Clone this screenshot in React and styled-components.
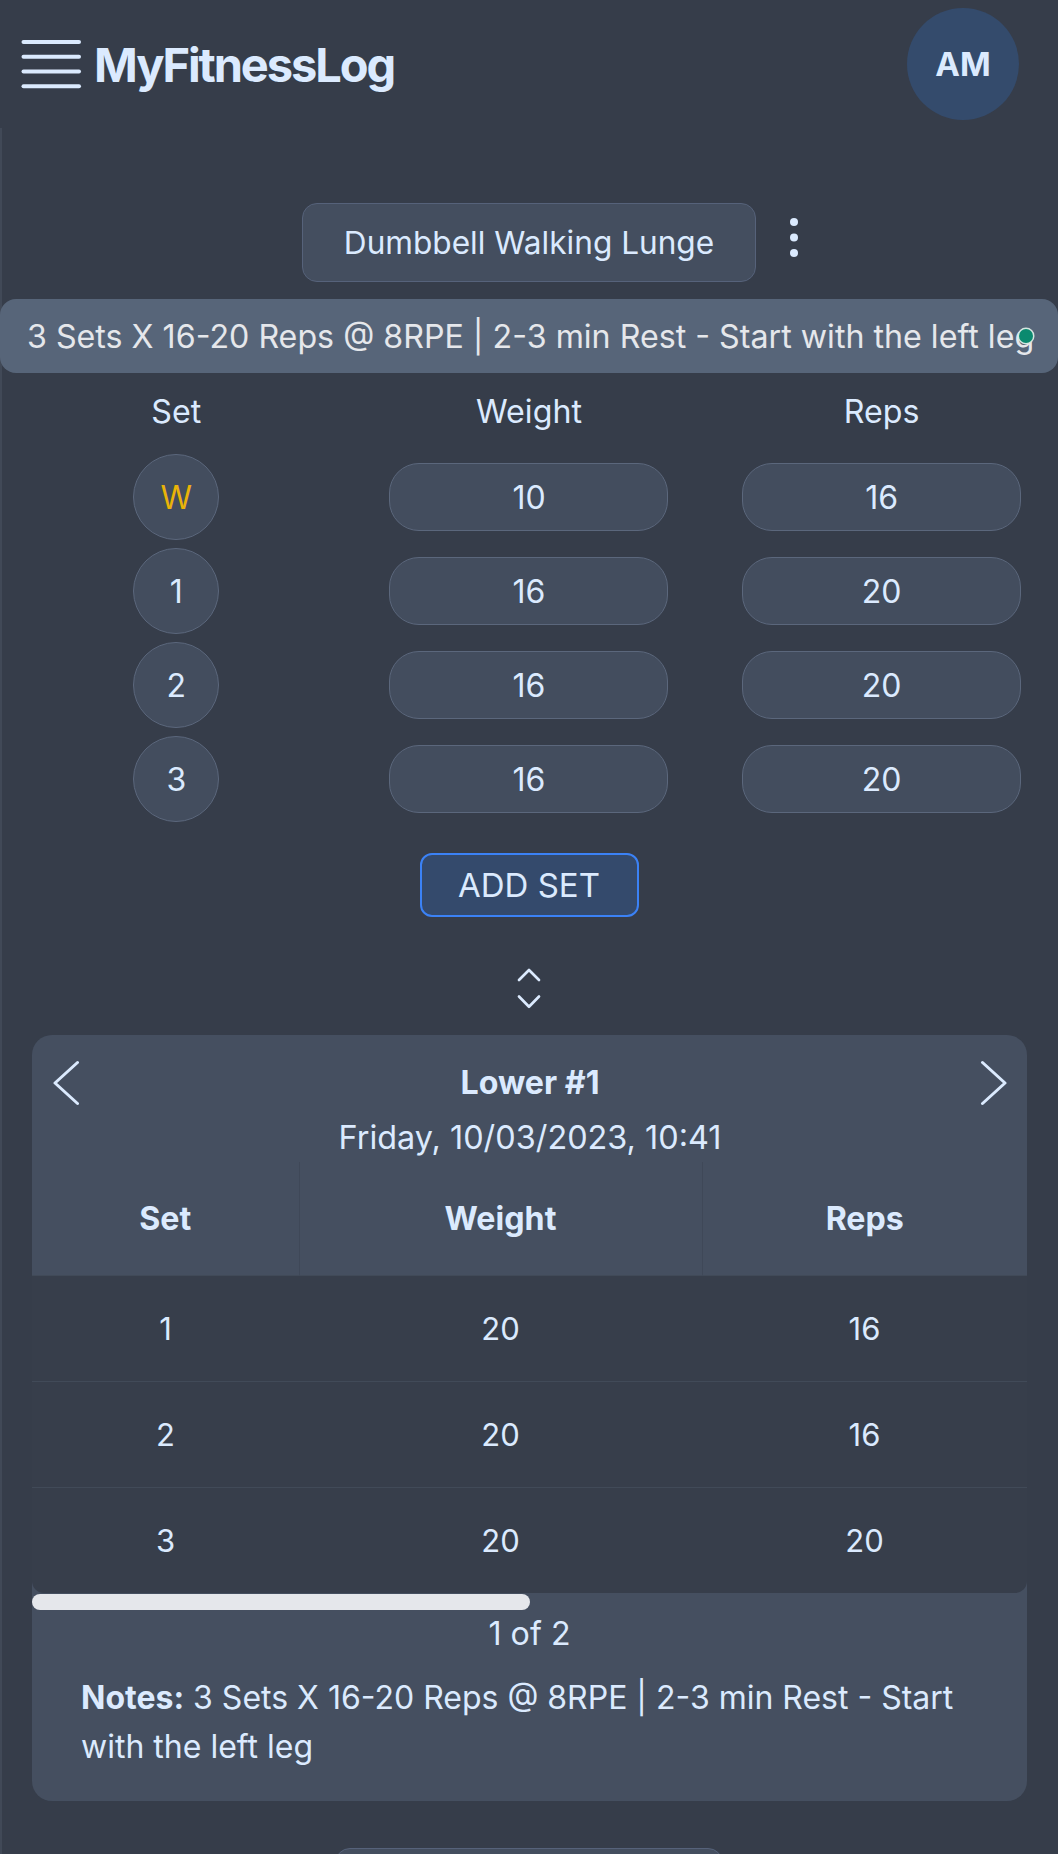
import React from "react";
import styled, { createGlobalStyle } from "styled-components";

const GlobalStyle = createGlobalStyle`
  html, body { margin: 0; padding: 0; background: #363d4a; }
  body { font-family: Inter, "Noto Sans", sans-serif; color: #dbeafe; }
  * { box-sizing: border-box; }
`;

const Page = styled.div`
  width: 1058px;
  min-height: 1854px;
  background: #363d4a;
  overflow: hidden;
`;

const Header = styled.header`
  height: 128px;
  display: flex;
  align-items: center;
  justify-content: space-between;
  padding: 0 39px 0 19px;
`;

const Brand = styled.div`
  display: flex;
  align-items: center;
  gap: 11px;
`;

const MenuButton = styled.button`
  background: none;
  border: none;
  padding: 0;
  display: flex;
  cursor: pointer;
`;

const Logo = styled.h1`
  margin: 0;
  font-size: 47px;
  font-weight: 700;
  letter-spacing: -2.1px;
  line-height: 1;
  color: #dbeafe;
`;

const Avatar = styled.div`
  width: 112px;
  height: 112px;
  border-radius: 50%;
  background: #344b6c;
  display: flex;
  align-items: center;
  justify-content: center;
  font-size: 33px;
  font-weight: 700;
  color: #dbeafe;
`;

const Main = styled.main`
  display: flex;
  flex-direction: column;
  padding-top: 75px;
  box-shadow: inset 2px 0 0 #414957;
`;

const ExerciseRow = styled.div`
  display: grid;
  grid-template-columns: 1fr auto 1fr;
  align-items: center;
`;

const ExerciseButton = styled.button`
  grid-column: 2;
  height: 79px;
  padding: 0 41px;
  border: 1.5px solid #56627a;
  border-radius: 15px;
  background: #444e5f;
  color: #dbeafe;
  font-family: inherit;
  font-size: 31.6px;
`;

const MoreButton = styled.button`
  grid-column: 3;
  justify-self: start;
  margin: 0 0 9px 31px;
  background: none;
  border: none;
  padding: 2px;
  display: flex;
`;

const NoteBanner = styled.div`
  position: relative;
  margin-top: 17px;
  height: 74px;
  border-radius: 16px;
  background: #576579;
  display: flex;
  align-items: center;
  padding-left: 27px;
  white-space: nowrap;
  overflow: hidden;
  font-size: 32.2px;
  color: #e5e7eb;
`;

const StatusDot = styled.span`
  position: absolute;
  right: 25px;
  top: 30px;
  width: 14px;
  height: 14px;
  border-radius: 50%;
  background: #0b8a6f;
  box-shadow: 0 0 0 1.5px #d5e6e0;
`;

const SetGrid = styled.div`
  display: grid;
  grid-template-columns: repeat(3, 1fr);
  row-gap: 8px;
  justify-items: center;
  align-items: center;
  margin-top: 16px;
`;

const ColHead = styled.div`
  font-size: 32.2px;
  line-height: 46px;
  margin-bottom: 11px;
`;

const SetBadge = styled.div`
  width: 86px;
  height: 86px;
  border-radius: 50%;
  border: 1.5px solid #5b677c;
  background: #434d5e;
  display: flex;
  align-items: center;
  justify-content: center;
  font-size: 32px;
  color: ${(p) => (p.$warmup ? "#eab308" : "#dbeafe")};
`;

const ValuePill = styled.div`
  width: 279px;
  height: 68px;
  border-radius: 30px;
  border: 1.5px solid #5b677c;
  background: #434d5e;
  display: flex;
  align-items: center;
  justify-content: center;
  font-size: 32px;
`;

const AddSetButton = styled.button`
  align-self: center;
  margin-top: 31px;
  width: 219px;
  height: 64px;
  border: 2px solid #3b82f6;
  border-radius: 12px;
  background: #344a6c;
  color: #dbeafe;
  font-family: inherit;
  font-size: 33px;
`;

const ToggleButton = styled.button`
  align-self: center;
  margin-top: 49px;
  background: none;
  border: none;
  padding: 0;
  display: flex;
`;

const HistoryCard = styled.section`
  margin: 24px 31px 0 32px;
  background: #454f60;
  border-radius: 20px;
`;

const CardTop = styled.div`
  display: grid;
  grid-template-columns: auto 1fr auto;
  align-items: center;
  padding: 25px 20px 0 21px;
`;

const NavArrow = styled.button`
  background: none;
  border: none;
  padding: 0;
  display: flex;
`;

const SessionTitle = styled.div`
  text-align: center;
  font-size: 32.2px;
  font-weight: 700;
  line-height: 46px;
`;

const SessionDate = styled.div`
  grid-column: 1 / -1;
  text-align: center;
  margin-top: 9px;
  font-size: 32.4px;
  line-height: 46px;
`;

const TableWrap = styled.div`
  margin-top: 1px;
  border-radius: 0 0 12px 12px;
  overflow: hidden;
`;

const Table = styled.table`
  width: 100%;
  border-collapse: collapse;
  table-layout: fixed;
`;

const HeadCell = styled.th`
  height: 113px;
  background: #454f60;
  font-size: 32.2px;
  font-weight: 700;
  color: #dbeafe;
  border-right: 1px solid #3f4858;
  &:last-child { border-right: none; }
`;

const BodyCell = styled.td`
  height: 106px;
  background: #373e4b;
  text-align: center;
  font-size: 31px;
  color: #dbeafe;
  border-top: 1px solid #414a58;
`;

const ScrollTrack = styled.div`
  height: 16px;
  margin-top: 1px;
`;

const ScrollThumb = styled.div`
  width: 50%;
  height: 16px;
  border-radius: 8px;
  background: #e5e7eb;
`;

const Pager = styled.div`
  text-align: center;
  margin-top: 1px;
  font-size: 32.2px;
  line-height: 46px;
`;

const Notes = styled.p`
  margin: 0;
  padding: 16px 49px 30px;
  font-size: 32px;
  line-height: 49px;
`;

const NotesLabel = styled.strong`
  font-weight: 700;
`;

const NextButton = styled.button`
  align-self: center;
  margin-top: 47px;
  width: 388px;
  height: 79px;
  border: 1.5px solid #56627a;
  border-radius: 15px;
  background: #444e5f;
  color: #dbeafe;
  font-family: inherit;
  font-size: 32px;
`;

const sets = [
  { label: "W", weight: 10, reps: 16, warmup: true },
  { label: "1", weight: 16, reps: 20 },
  { label: "2", weight: 16, reps: 20 },
  { label: "3", weight: 16, reps: 20 },
];

const history = [
  { set: 1, weight: 20, reps: 16 },
  { set: 2, weight: 20, reps: 16 },
  { set: 3, weight: 20, reps: 20 },
];

const noteText = "3 Sets X 16-20 Reps @ 8RPE | 2-3 min Rest - Start with the left leg";

export default function App() {
  return (
    <>
      <GlobalStyle />
      <Page>
        <Header>
          <Brand>
            <MenuButton aria-label="menu">
              <svg width="64" height="50" viewBox="0 0 64 50">
                <g stroke="#dbeafe" strokeWidth="4" strokeLinecap="round">
                  <line x1="4.5" y1="3" x2="60" y2="3" />
                  <line x1="4.5" y1="17.7" x2="60" y2="17.7" />
                  <line x1="4.5" y1="32.5" x2="60" y2="32.5" />
                  <line x1="4.5" y1="47.3" x2="60" y2="47.3" />
                </g>
              </svg>
            </MenuButton>
            <Logo>MyFitnessLog</Logo>
          </Brand>
          <Avatar>AM</Avatar>
        </Header>
        <Main>
          <ExerciseRow>
            <ExerciseButton>Dumbbell Walking Lunge</ExerciseButton>
            <MoreButton aria-label="more">
              <svg width="10" height="42" viewBox="0 0 10 42">
                <g fill="#dbeafe">
                  <circle cx="5" cy="5" r="4" />
                  <circle cx="5" cy="20.5" r="4" />
                  <circle cx="5" cy="36" r="4" />
                </g>
              </svg>
            </MoreButton>
          </ExerciseRow>
          <NoteBanner>
            {noteText}
            <StatusDot />
          </NoteBanner>
          <SetGrid>
            <ColHead>Set</ColHead>
            <ColHead>Weight</ColHead>
            <ColHead>Reps</ColHead>
            {sets.map((s) => (
              <React.Fragment key={s.label}>
                <SetBadge $warmup={s.warmup}>{s.label}</SetBadge>
                <ValuePill>{s.weight}</ValuePill>
                <ValuePill>{s.reps}</ValuePill>
              </React.Fragment>
            ))}
          </SetGrid>
          <AddSetButton>ADD SET</AddSetButton>
          <ToggleButton aria-label="toggle history">
            <svg width="30" height="45" viewBox="0 0 30 45" fill="none" stroke="#dbeafe" strokeWidth="2.7" strokeLinecap="round" strokeLinejoin="round">
              <path d="M5 14 L15 4 L25 14" />
              <path d="M5 30.5 L15 40.7 L25 30.5" />
            </svg>
          </ToggleButton>
          <HistoryCard>
            <CardTop>
              <NavArrow aria-label="previous">
                <svg width="28" height="46" viewBox="0 0 28 46" fill="none" stroke="#dbeafe" strokeWidth="3" strokeLinecap="round" strokeLinejoin="round">
                  <path d="M24.5 2.5 L2 23 L24.5 43.5" />
                </svg>
              </NavArrow>
              <SessionTitle>Lower #1</SessionTitle>
              <NavArrow aria-label="next">
                <svg width="28" height="46" viewBox="0 0 28 46" fill="none" stroke="#dbeafe" strokeWidth="3" strokeLinecap="round" strokeLinejoin="round">
                  <path d="M3.5 2.5 L26 23 L3.5 43.5" />
                </svg>
              </NavArrow>
              <SessionDate>Friday, 10/03/2023, 10:41</SessionDate>
            </CardTop>
            <TableWrap>
              <Table>
                <colgroup>
                  <col style={{ width: "267px" }} />
                  <col style={{ width: "403px" }} />
                  <col />
                </colgroup>
                <thead>
                  <tr>
                    <HeadCell>Set</HeadCell>
                    <HeadCell>Weight</HeadCell>
                    <HeadCell>Reps</HeadCell>
                  </tr>
                </thead>
                <tbody>
                  {history.map((h) => (
                    <tr key={h.set}>
                      <BodyCell>{h.set}</BodyCell>
                      <BodyCell>{h.weight}</BodyCell>
                      <BodyCell>{h.reps}</BodyCell>
                    </tr>
                  ))}
                </tbody>
              </Table>
            </TableWrap>
            <ScrollTrack>
              <ScrollThumb />
            </ScrollTrack>
            <Pager>1 of 2</Pager>
            <Notes>
              <NotesLabel>Notes:</NotesLabel> {noteText}
            </Notes>
          </HistoryCard>
          <NextButton>Next Exercise</NextButton>
        </Main>
      </Page>
    </>
  );
}
